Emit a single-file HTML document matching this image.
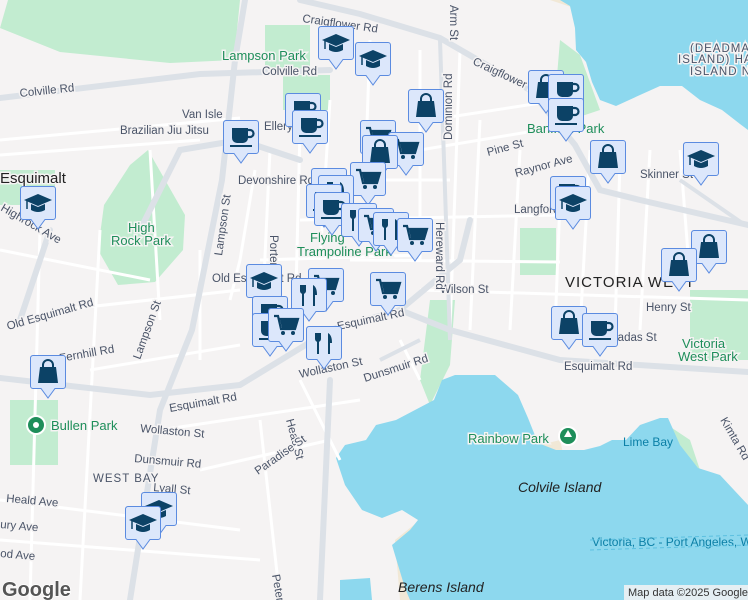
<!DOCTYPE html>
<html><head><meta charset="utf-8"><style>
html,body{margin:0;padding:0;width:748px;height:600px;overflow:hidden;background:#f5f3f3}
svg{display:block}
text{font-family:"Liberation Sans",sans-serif}
.st{font-size:11.5px;fill:#4a5468;paint-order:stroke;stroke:#f5f3f3;stroke-width:3px}
.pk{font-size:13px;fill:#1e8e5a;paint-order:stroke;stroke:#f5f3f3;stroke-width:3px}
.big{font-size:15px;fill:#222;paint-order:stroke;stroke:#f5f3f3;stroke-width:3px}
.wt{font-size:12px;fill:#0b7fa6}
</style></head><body>
<svg width="748" height="600" viewBox="0 0 748 600" xmlns="http://www.w3.org/2000/svg">
<defs>
<g id="mk"><path d="M3 0.5H33a2.5 2.5 0 0 1 2.5 2.5V31a2.5 2.5 0 0 1-2.5 2.5H25L18 43L11 33.5H3A2.5 2.5 0 0 1 .5 31V3A2.5 2.5 0 0 1 3 .5Z" fill="#dce7fb" stroke="#5b8be0" stroke-width="1"/></g>
<g id="cup"><use href="#mk"/><path d="M9 8h16v10a5 5 0 0 1-5 5h-6a5 5 0 0 1-5-5Z" fill="#0c4266"/><path d="M25 10h2a3 3 0 0 1 0 7h-2" fill="none" stroke="#0c4266" stroke-width="2.2"/><rect x="7" y="25" width="22" height="2" fill="#0c4266"/></g>
<g id="bag"><use href="#mk"/><path d="M13 12V10a5 5 0 0 1 10 0v2" fill="none" stroke="#0c4266" stroke-width="2"/><path d="M10 12h16l2 16H8Z" fill="#0c4266"/></g>
<g id="cart"><use href="#mk"/><path d="M6 8h4l3 13h14l3-10H11" fill="none" stroke="#0c4266" stroke-width="2.2"/><path d="M12 12h17l-2 8H14Z" fill="#0c4266"/><circle cx="15" cy="25" r="2" fill="#0c4266"/><circle cx="25" cy="25" r="2" fill="#0c4266"/></g>
<g id="grad"><use href="#mk"/><path d="M4 14L18 8l14 6-14 6Z" fill="#0c4266"/><path d="M11 18v6q7 4 14 0v-6l-7 3Z" fill="#0c4266"/><path d="M7 15v8" stroke="#0c4266" stroke-width="1.5"/></g>
<g id="food"><use href="#mk"/><path d="M12 7v8M10 7v6a2 2 0 0 0 4 0V7M12 15v13" fill="none" stroke="#0c4266" stroke-width="2"/><path d="M22 7q4 2 4 10h-2v11h-2Z" fill="#0c4266"/></g>
</defs>
<g fill="#c2ecd0">
<path d="M8 0H240L234 60L170 63L60 52L0 28Z"/>
<path d="M130 165L148 150L185 215L183 250L155 282L118 285L98 250L104 205Z"/>
<path d="M265 25H310V70H265Z"/><path d="M283 75H330V110H283Z"/>
<path d="M0 170H55V205H0Z"/>
<path d="M10 400H58V465H10Z"/>
<path d="M520 228H556V275H520Z"/>
<path d="M430 300L455 300L450 365L430 405L420 380Z"/>
<path d="M560 40L580 55L600 110L570 120L555 100Z"/>
<path d="M690 290H748V360H690Z"/>
<path d="M660 420L690 440L700 470L670 465Z"/>
</g>
<g fill="#f1e8d6">
<path d="M550 0H640L620 8L580 10Z"/>
<path d="M540 445L560 440L565 462L545 466Z"/>
<path d="M395 540L420 520L440 600H400Z"/>
</g>
<g fill="#8dd8ee">
<path d="M560 0L570 6L575 28L576 50L586 62L592 82L600 100L616 106L640 95L660 86L682 86L700 100L722 110L740 124L748 130V0Z"/>
<path d="M455 375L495 375L518 395L528 418L538 443L556 450L584 450L600 446L612 440L626 440L640 425L660 418L668 418L680 445L698 468L720 475L748 505V600H410L405 588L398 565L392 545L410 530L418 520L402 510L382 518L362 510L345 485L336 458L345 445L366 440L376 425L396 420L434 400L442 380Z"/>
<path d="M340 580L370 578L372 600H340Z"/>
</g>
<g stroke="#ffffff" stroke-width="3" fill="none">
<path d="M0 140L240 118M0 155L200 140M150 150L160 320M255 170L240 260L230 300M270 150L262 320M300 130L295 330M330 100L320 260M370 40L365 180M420 50L420 260M460 50L450 330M480 120L470 330M520 150L510 330M560 200L555 330M590 150L580 330M620 160L615 330M650 150L640 330M680 150L690 280M300 180L450 180M300 220L560 215M350 260L560 262M260 260L420 255M420 290L748 300M420 150L540 130M430 120L560 100M60 310L240 290M90 370L240 345M0 250L150 280M40 230L30 600M100 230L80 600M0 500L240 530M0 540L260 560M160 430L360 400M200 470L330 440M300 380L340 460M260 420L280 600M400 340L420 380M200 250L200 360"/>
</g>
<g stroke="#dce1e7" stroke-width="6" fill="none" stroke-linecap="round">
<path d="M0 378L150 395L240 385L330 330L400 310L450 330L560 360L748 372"/>
<path d="M300 0L360 14L440 38L530 90L575 145L600 190L640 200L748 225"/>
<path d="M0 98L200 74L330 70"/>
<path d="M245 0L235 60L222 180L192 330L160 410L130 600"/>
<path d="M140 230L180 150L240 140L300 160"/>
<path d="M330 380L320 600"/>
<path d="M400 310L460 260L470 220"/>
<path d="M50 230L20 320"/>
</g>
<g stroke="#dce1e7" stroke-width="4" fill="none">
<path d="M440 40L450 340M680 180L745 225M380 360L420 340"/>
</g>
<text class="st" x="302" y="22" transform="rotate(8 302 22)" font-size="12">Craigflower Rd</text>
<text class="st" x="20" y="97" transform="rotate(-6 20 97)">Colville Rd</text>
<text class="st" x="262" y="75">Colville Rd</text>
<text class="pk" x="222" y="60">Lampson Park</text>
<text class="st" x="182" y="118" font-size="12">Van Isle</text>
<text class="st" x="120" y="134" font-size="12">Brazilian Jiu Jitsu</text>
<text class="st" x="264" y="130">Ellery</text>
<text class="st" x="238" y="184">Devonshire Rd</text>
<text class="big" x="0" y="183">Esquimalt</text>
<text class="st" x="0" y="210" transform="rotate(30 0 210)">Highrock Ave</text>
<text class="pk" x="128" y="232">High</text>
<text class="pk" x="111" y="245">Rock Park</text>
<text class="st" x="222" y="256" transform="rotate(-82 222 256)">Lampson St</text>
<text class="st" x="270" y="235" transform="rotate(90 270 235)">Porter Rd</text>
<text class="pk" x="310" y="242">Flying</text>
<text class="pk" x="297" y="256">Trampoline Park</text>
<text class="st" x="212" y="282">Old Esquimalt Rd</text>
<text class="st" x="8" y="330" transform="rotate(-16 8 330)">Old Esquimalt Rd</text>
<text class="st" x="60" y="362" transform="rotate(-10 60 362)">Fernhill Rd</text>
<text class="st" x="140" y="360" transform="rotate(-70 140 360)">Lampson St</text>
<text class="st" x="170" y="412" transform="rotate(-10 170 412)" font-size="12">Esquimalt Rd</text>
<text class="st" x="338" y="330" transform="rotate(-12 338 330)" font-size="12">Esquimalt Rd</text>
<text class="st" x="300" y="378" transform="rotate(-12 300 378)">Wollaston St</text>
<text class="st" x="365" y="382" transform="rotate(-18 365 382)">Dunsmuir Rd</text>
<circle cx="36" cy="425" r="9" fill="#1e8e5a" stroke="#fff" stroke-width="2"/><circle cx="36" cy="425" r="3" fill="#fff"/>
<text class="pk" x="51" y="430">Bullen Park</text>
<text class="st" x="140" y="432" transform="rotate(5 140 432)">Wollaston St</text>
<text class="st" x="134" y="462" transform="rotate(5 134 462)">Dunsmuir Rd</text>
<text class="st" x="93" y="482" font-size="10" letter-spacing="1">WEST BAY</text>
<text class="st" x="153" y="491" transform="rotate(5 153 491)">Lyall St</text>
<text class="st" x="6" y="502" transform="rotate(5 6 502)">Heald Ave</text>
<text class="st" x="0" y="528" transform="rotate(5 0 528)">ury Ave</text>
<text class="st" x="0" y="557" transform="rotate(5 0 557)">od Ave</text>
<text class="st" x="286" y="420" transform="rotate(75 286 420)">Head St</text>
<text class="st" x="258" y="475" transform="rotate(-35 258 475)">Paradise St</text>
<text class="st" x="272" y="575" transform="rotate(80 272 575)">Peters St</text>
<text x="2" y="596" font-size="20" font-weight="bold" fill="#555" stroke="#fff" stroke-width="1.5" paint-order="stroke">Google</text>
<text x="398" y="592" font-size="14" font-style="italic" fill="#222">Berens Island</text>
<text x="518" y="492" font-size="14" font-style="italic" fill="#222">Colvile Island</text>
<text class="wt" x="592" y="546">Victoria, BC - Port Angeles, W</text>
<path d="M590 540L748 535M590 550L748 545" stroke="#5cc0e0" stroke-width="1" stroke-dasharray="4 3"/>
<text class="wt" x="623" y="446">Lime Bay</text>
<text class="pk" x="468" y="443">Rainbow Park</text>
<circle cx="568" cy="436" r="9" fill="#1e8e5a" stroke="#fff" stroke-width="2"/><path d="M568 430l-4 7h8Z" fill="#fff"/>
<text class="st" x="720" y="420" transform="rotate(60 720 420)">Kimta Rd</text>
<rect x="624" y="585" width="124" height="15" fill="#f5f3f3" opacity=".85"/>
<text x="628" y="596" font-size="11" fill="#333">Map data ©2025 Google</text>
<text class="st" x="564" y="370" font-size="12">Esquimalt Rd</text>
<text class="big" x="565" y="287" font-size="12" letter-spacing="1" fill="#333">VICTORIA WEST</text>
<text class="pk" x="682" y="348" font-size="12">Victoria</text>
<text class="pk" x="678" y="361" font-size="12">West Park</text>
<text class="st" x="440" y="293">Wilson St</text>
<text class="st" x="646" y="311">Henry St</text>
<text class="st" x="610" y="341">Sadas St</text>
<text class="st" x="436" y="222" transform="rotate(90 436 222)">Hereward Rd</text>
<text class="st" x="452" y="140" transform="rotate(-90 452 140)">Dominion Rd</text>
<text class="st" x="450" y="5" transform="rotate(90 450 5)">Arm St</text>
<text class="st" x="472" y="64" transform="rotate(25 472 64)" font-size="12">Craigflower Rd</text>
<text class="st" x="488" y="156" transform="rotate(-15 488 156)">Pine St</text>
<text class="st" x="516" y="177" transform="rotate(-15 516 177)">Raynor Ave</text>
<text class="pk" x="527" y="133">Banfield Park</text>
<text class="st" x="640" y="178" font-size="12">Skinner St</text>
<text class="st" x="514" y="213">Langford St</text>
<text class="st" x="690" y="52" font-size="11" letter-spacing="1">(DEADMAN</text>
<text class="st" x="678" y="63" font-size="11" letter-spacing="1">ISLAND) HA</text>
<text class="st" x="690" y="75" font-size="11" letter-spacing="1">ISLAND N</text>
<use href="#grad" x="318" y="26"/><use href="#grad" x="355" y="42"/>
<use href="#cup" x="285" y="93"/><use href="#cup" x="292" y="110"/>
<use href="#cup" x="223" y="120"/>
<use href="#bag" x="408" y="89"/>
<use href="#cart" x="360" y="120"/><use href="#cart" x="388" y="132"/><use href="#bag" x="362" y="135"/>
<use href="#bag" x="528" y="70"/><use href="#cup" x="548" y="74"/><use href="#cup" x="548" y="98"/>
<use href="#bag" x="590" y="140"/><use href="#grad" x="683" y="142"/>
<use href="#grad" x="20" y="186"/>
<use href="#cart" x="350" y="162"/>
<use href="#cup" x="311" y="168"/><use href="#food" x="318" y="175"/><use href="#cup" x="306" y="184"/><use href="#cup" x="314" y="192"/>
<use href="#food" x="341" y="203"/><use href="#cart" x="358" y="208"/><use href="#food" x="373" y="212"/><use href="#cart" x="397" y="218"/>
<use href="#cup" x="550" y="176"/><use href="#grad" x="555" y="186"/>
<use href="#bag" x="691" y="230"/><use href="#bag" x="661" y="248"/>
<use href="#grad" x="246" y="264"/><use href="#cart" x="308" y="268"/><use href="#food" x="291" y="278"/>
<use href="#cup" x="252" y="296"/><use href="#cup" x="252" y="313"/><use href="#cart" x="268" y="308"/><use href="#food" x="306" y="326"/>
<use href="#cart" x="370" y="272"/>
<use href="#bag" x="551" y="306"/><use href="#cup" x="582" y="313"/>
<use href="#bag" x="30" y="355"/>
<use href="#grad" x="141" y="492"/><use href="#grad" x="125" y="506"/>
</svg>
</body></html>
